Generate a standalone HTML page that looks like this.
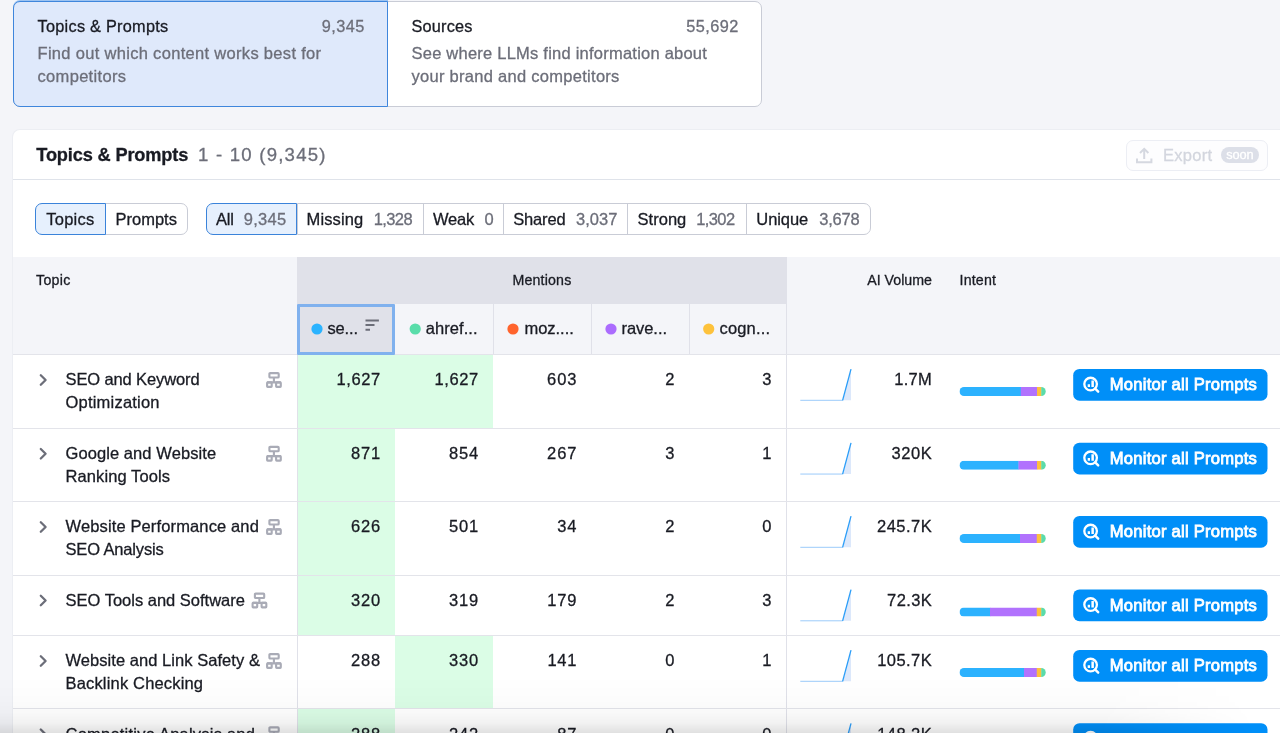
<!DOCTYPE html>
<html lang="en">
<head>
<meta charset="utf-8">
<title>Topics &amp; Prompts</title>
<style>
*{box-sizing:border-box;margin:0;padding:0}
html,body{width:1280px;height:733px;overflow:hidden;background:#f4f5f9}
body{font-family:"Liberation Sans",Arial,sans-serif;color:#191b23;font-size:16px;position:relative}
.t{position:absolute;line-height:20px;white-space:pre;color:#191b23;z-index:4;-webkit-text-stroke:0.3px}
.ic{position:absolute;z-index:4;overflow:visible}
.cards{position:absolute;left:13px;top:1px;width:749px;height:106px;border:1px solid #c9ccd6;border-radius:7px;background:#fff}
.card1{position:absolute;left:13px;top:1px;width:374.5px;height:106px;background:#dfe9fb;border:1px solid #3f86dc;border-radius:7px 0 0 7px;box-shadow:0 -1px 0 #9cc3f1}
.panel{position:absolute;left:12.5px;top:129.5px;width:1290px;height:640px;background:#fff;border-radius:7px 0 0 0;box-shadow:0 0 0 1px #eceef3}
.hline{position:absolute;left:13px;top:178.7px;width:1267px;height:1px;background:#dfe3ea}
.export{position:absolute;left:1126px;top:139.5px;width:141.5px;height:31.5px;border:1px solid #eceef4;border-radius:7px;background:#fdfdfe}
.soon{position:absolute;left:1221.2px;top:147.2px;width:37.5px;height:15.8px;border-radius:8px;background:#dcdfe8}
.pill{position:absolute;top:203px;height:32px;border:1px solid #c9ccd6;background:#fff}
.pill.sel{background:#e6f0fd;border-color:#3a83da;z-index:2}
.thead{position:absolute;left:13px;top:257.3px;width:1267px;height:97px;background:#f4f5f9}
.mband{position:absolute;left:297px;top:257.3px;width:490px;height:46.6px;background:#e0e1e9}
.sub1{position:absolute;left:297px;top:304px;width:98px;height:51px;background:#e0e1e9;border:3px solid #80b1ee;border-radius:1px;z-index:4}
.vline{position:absolute;width:1px;background:#e0e1e9;z-index:3}
.rline{position:absolute;left:13px;width:1267px;height:1px;background:#e3e4ea;z-index:3}
.green{position:absolute;background:#dbfde6;z-index:2}
.dot{position:absolute;width:11.4px;height:11.4px;border-radius:50%;top:323.3px;z-index:4}
.bar{position:absolute;height:9px;border-radius:4.5px;overflow:hidden;z-index:4}
.bar i{position:absolute;top:0;height:9px}
.btn{position:absolute;left:1073.2px;width:194.3px;height:31.8px;border-radius:6.5px;background:#008ff8;z-index:5}
.z5{z-index:5}
.z6{z-index:6}
.ms{-webkit-text-stroke:0.8px #fff}
.txt{position:absolute;left:0;top:0;width:1280px;height:733px;z-index:10;will-change:transform}
.fade{position:absolute;left:0;top:676px;width:1280px;height:57px;background:linear-gradient(to bottom,rgba(0,0,0,0) 0%,rgba(0,0,0,0.01) 42%,rgba(0,0,0,0.022) 63%,rgba(0,0,0,0.05) 82%,rgba(0,0,0,0.12) 100%);z-index:20;-webkit-mask-image:linear-gradient(to right,#000 0%,#000 86%,transparent 98%);mask-image:linear-gradient(to right,#000 0%,#000 86%,transparent 98%)}
</style>
</head>
<body>
<div class="cards"></div><div class="card1"></div>
<div class="panel"></div>
<div class="hline"></div>
<div class="export"></div><div class="soon"></div>
<svg class="ic" style="left:1136px;top:147px" width="17" height="17" viewBox="0 0 17 17"><g fill="none" stroke="#d5d8e0" stroke-width="2"><path d="M1 11.5V15.2H15.4V11.5"/><path d="M8.2 12V2M4 6L8.2 1.8L12.4 6"/></g></svg>

<div class="pill" style="left:105px;width:82.5px;border-radius:0 7px 7px 0"></div>
<div class="pill sel" style="left:35px;width:70.5px;border-radius:7px 0 0 7px"></div>
<div class="pill" style="left:296.5px;width:574.5px;border-radius:0 7px 7px 0"></div>
<div class="pill sel" style="left:206px;width:91px;border-radius:7px 0 0 7px"></div>
<div class="vline" style="left:422.5px;top:204px;height:30px;background:#c9ccd6"></div>
<div class="vline" style="left:503px;top:204px;height:30px;background:#c9ccd6"></div>
<div class="vline" style="left:627.2px;top:204px;height:30px;background:#c9ccd6"></div>
<div class="vline" style="left:746px;top:204px;height:30px;background:#c9ccd6"></div>

<div class="thead"></div>
<div class="mband"></div>
<div class="sub1"></div>
<div class="vline" style="left:493px;top:304px;height:50px"></div>
<div class="vline" style="left:591px;top:304px;height:50px"></div>
<div class="vline" style="left:688.5px;top:304px;height:50px"></div>
<div class="vline" style="left:296.5px;top:354px;height:400px"></div>
<div class="vline" style="left:786px;top:257px;height:500px"></div>
<svg class="ic" style="left:311px;top:323px" width="12" height="12" viewBox="0 0 12 12"><circle cx="6.0" cy="6" r="5.6" fill="#2bb3ff"/></svg>
<svg class="ic" style="left:409px;top:323px" width="12" height="12" viewBox="0 0 12 12"><circle cx="6.2" cy="6" r="5.6" fill="#59ddaa"/></svg>
<svg class="ic" style="left:507px;top:323px" width="12" height="12" viewBox="0 0 12 12"><circle cx="6.0" cy="6" r="5.6" fill="#ff642d"/></svg>
<svg class="ic" style="left:605px;top:323px" width="12" height="12" viewBox="0 0 12 12"><circle cx="6.0" cy="6" r="5.6" fill="#ab6cfe"/></svg>
<svg class="ic" style="left:703px;top:323px" width="12" height="12" viewBox="0 0 12 12"><circle cx="5.7" cy="6" r="5.6" fill="#fdc23c"/></svg>
<svg class="ic" style="left:365px;top:319px" width="15" height="13" viewBox="0 0 15 13"><path d="M0.5 1.5H13.9M0.5 6H9.5M0.5 10.7H5" stroke="#6c6e79" stroke-width="2" fill="none"/></svg>

<div class="green" style="left:297px;top:354.5px;width:98px;height:73.75px"></div>
<div class="green" style="left:395px;top:354.5px;width:98px;height:73.75px"></div>
<div class="rline" style="top:354px"></div>
<svg class="ic" style="left:39px;top:373px" width="10" height="14" viewBox="0 0 10 14"><g transform="translate(0 0.8)"><path d="M1.8 1.5L6.6 6.2L1.8 10.9" fill="none" stroke="#6c6e79" stroke-width="2.3" stroke-linecap="round" stroke-linejoin="round"/></g></svg>
<svg class="ic" style="left:265px;top:371px" width="19" height="19" viewBox="0 0 19 19"><g transform="translate(0 0)"><g fill="none" stroke="#a9abb6" stroke-width="2.1"><rect x="4.4" y="2.1" width="9.3" height="4.4" rx="0.8"/><rect x="2.1" y="11.4" width="4.6" height="4.5" rx="0.6"/><rect x="11.1" y="11.4" width="4.7" height="4.5" rx="0.6"/><path d="M8.9 6.5V11.4M2.1 11.4H15.8"/></g></g></svg>
<svg class="ic" style="left:800px;top:367px" width="55" height="36" viewBox="0 0 55 36"><g transform="translate(0 0.5)"><path d="M42.8 32.8L51 1.7V32.8Z" fill="#dce8fb"/><path d="M0.3 32.8H42.8" fill="none" stroke="#9ccbfa" stroke-width="1"/><path d="M42.6 32.8L51 1.7" fill="none" stroke="#2a9df8" stroke-width="1.3"/></g></svg>
<svg class="ic" style="left:959px;top:387px" width="89" height="11" viewBox="0 0 89 11"><g transform="translate(0.5 0)"><clipPath id="c354"><rect x="0" y="0" width="86.25" height="9" rx="4.5"/></clipPath><g clip-path="url(#c354)"><rect x="0" y="0" width="61.55" height="9" fill="#2cb2fe"/><rect x="61.25" y="0" width="16.55" height="9" fill="#b172fd"/><rect x="77.5" y="0" width="4.55" height="9" fill="#fdc03c"/><rect x="81.75" y="0" width="4.8" height="9" fill="#5bdcaa"/></g></g></svg>
<svg class="ic z5" style="left:1073px;top:369px" width="197" height="34" viewBox="0 0 197 34"><g transform="translate(0.2 0)"><rect x="0" y="0" width="194.3" height="31.7" rx="6.3" fill="#008ff8"/></g></svg>
<svg class="ic z6" style="left:1082px;top:375px" width="19" height="19" viewBox="0 0 19 19"><g transform="translate(0 0.5)"><g fill="none" stroke="#fff" stroke-width="2.3"><circle cx="8.6" cy="8.55" r="6.3"/><path d="M13.2 13.1L16.2 16.2" stroke-width="2.4" stroke-linecap="round"/></g><path d="M5.7 8.7h2.3v2.7H5.7zM9.4 5h2.5v6.4H9.4z" fill="#fff"/></g></svg>
<div class="green" style="left:297px;top:428.25px;width:98px;height:73.25px"></div>
<div class="rline" style="top:427.75px"></div>
<svg class="ic" style="left:39px;top:447px" width="10" height="14" viewBox="0 0 10 14"><g transform="translate(0 0.55)"><path d="M1.8 1.5L6.6 6.2L1.8 10.9" fill="none" stroke="#6c6e79" stroke-width="2.3" stroke-linecap="round" stroke-linejoin="round"/></g></svg>
<svg class="ic" style="left:265px;top:444px" width="19" height="19" viewBox="0 0 19 19"><g transform="translate(0 0.75)"><g fill="none" stroke="#a9abb6" stroke-width="2.1"><rect x="4.4" y="2.1" width="9.3" height="4.4" rx="0.8"/><rect x="2.1" y="11.4" width="4.6" height="4.5" rx="0.6"/><rect x="11.1" y="11.4" width="4.7" height="4.5" rx="0.6"/><path d="M8.9 6.5V11.4M2.1 11.4H15.8"/></g></g></svg>
<svg class="ic" style="left:800px;top:441px" width="55" height="36" viewBox="0 0 55 36"><g transform="translate(0 0.25)"><path d="M42.8 32.8L51 1.7V32.8Z" fill="#dce8fb"/><path d="M0.3 32.8H42.8" fill="none" stroke="#9ccbfa" stroke-width="1"/><path d="M42.6 32.8L51 1.7" fill="none" stroke="#2a9df8" stroke-width="1.3"/></g></svg>
<svg class="ic" style="left:959px;top:460px" width="89" height="11" viewBox="0 0 89 11"><g transform="translate(0.5 0.75)"><clipPath id="c428"><rect x="0" y="0" width="86.25" height="9" rx="4.5"/></clipPath><g clip-path="url(#c428)"><rect x="0" y="0" width="59.3" height="9" fill="#2cb2fe"/><rect x="59" y="0" width="18.8" height="9" fill="#b172fd"/><rect x="77.5" y="0" width="4.55" height="9" fill="#fdc03c"/><rect x="81.75" y="0" width="4.8" height="9" fill="#5bdcaa"/></g></g></svg>
<svg class="ic z5" style="left:1073px;top:442px" width="197" height="34" viewBox="0 0 197 34"><g transform="translate(0.2 0.75)"><rect x="0" y="0" width="194.3" height="31.7" rx="6.3" fill="#008ff8"/></g></svg>
<svg class="ic z6" style="left:1082px;top:449px" width="19" height="19" viewBox="0 0 19 19"><g transform="translate(0 0.25)"><g fill="none" stroke="#fff" stroke-width="2.3"><circle cx="8.6" cy="8.55" r="6.3"/><path d="M13.2 13.1L16.2 16.2" stroke-width="2.4" stroke-linecap="round"/></g><path d="M5.7 8.7h2.3v2.7H5.7zM9.4 5h2.5v6.4H9.4z" fill="#fff"/></g></svg>
<div class="green" style="left:297px;top:501.5px;width:98px;height:73.5px"></div>
<div class="rline" style="top:501px"></div>
<svg class="ic" style="left:39px;top:520px" width="10" height="14" viewBox="0 0 10 14"><g transform="translate(0 0.8)"><path d="M1.8 1.5L6.6 6.2L1.8 10.9" fill="none" stroke="#6c6e79" stroke-width="2.3" stroke-linecap="round" stroke-linejoin="round"/></g></svg>
<svg class="ic" style="left:265px;top:518px" width="19" height="19" viewBox="0 0 19 19"><g transform="translate(0 0)"><g fill="none" stroke="#a9abb6" stroke-width="2.1"><rect x="4.4" y="2.1" width="9.3" height="4.4" rx="0.8"/><rect x="2.1" y="11.4" width="4.6" height="4.5" rx="0.6"/><rect x="11.1" y="11.4" width="4.7" height="4.5" rx="0.6"/><path d="M8.9 6.5V11.4M2.1 11.4H15.8"/></g></g></svg>
<svg class="ic" style="left:800px;top:514px" width="55" height="36" viewBox="0 0 55 36"><g transform="translate(0 0.5)"><path d="M42.8 32.8L51 1.7V32.8Z" fill="#dce8fb"/><path d="M0.3 32.8H42.8" fill="none" stroke="#9ccbfa" stroke-width="1"/><path d="M42.6 32.8L51 1.7" fill="none" stroke="#2a9df8" stroke-width="1.3"/></g></svg>
<svg class="ic" style="left:959px;top:534px" width="89" height="11" viewBox="0 0 89 11"><g transform="translate(0.5 0)"><clipPath id="c501"><rect x="0" y="0" width="86.25" height="9" rx="4.5"/></clipPath><g clip-path="url(#c501)"><rect x="0" y="0" width="60.8" height="9" fill="#2cb2fe"/><rect x="60.5" y="0" width="17.05" height="9" fill="#b172fd"/><rect x="77.25" y="0" width="4.8" height="9" fill="#fdc03c"/><rect x="81.75" y="0" width="4.8" height="9" fill="#5bdcaa"/></g></g></svg>
<svg class="ic z5" style="left:1073px;top:516px" width="197" height="34" viewBox="0 0 197 34"><g transform="translate(0.2 0)"><rect x="0" y="0" width="194.3" height="31.7" rx="6.3" fill="#008ff8"/></g></svg>
<svg class="ic z6" style="left:1082px;top:522px" width="19" height="19" viewBox="0 0 19 19"><g transform="translate(0 0.5)"><g fill="none" stroke="#fff" stroke-width="2.3"><circle cx="8.6" cy="8.55" r="6.3"/><path d="M13.2 13.1L16.2 16.2" stroke-width="2.4" stroke-linecap="round"/></g><path d="M5.7 8.7h2.3v2.7H5.7zM9.4 5h2.5v6.4H9.4z" fill="#fff"/></g></svg>
<div class="green" style="left:297px;top:575px;width:98px;height:60.5px"></div>
<div class="rline" style="top:574.5px"></div>
<svg class="ic" style="left:39px;top:594px" width="10" height="14" viewBox="0 0 10 14"><g transform="translate(0 0.3)"><path d="M1.8 1.5L6.6 6.2L1.8 10.9" fill="none" stroke="#6c6e79" stroke-width="2.3" stroke-linecap="round" stroke-linejoin="round"/></g></svg>
<svg class="ic" style="left:250px;top:591px" width="19" height="19" viewBox="0 0 19 19"><g transform="translate(0.5 0.5)"><g fill="none" stroke="#a9abb6" stroke-width="2.1"><rect x="4.4" y="2.1" width="9.3" height="4.4" rx="0.8"/><rect x="2.1" y="11.4" width="4.6" height="4.5" rx="0.6"/><rect x="11.1" y="11.4" width="4.7" height="4.5" rx="0.6"/><path d="M8.9 6.5V11.4M2.1 11.4H15.8"/></g></g></svg>
<svg class="ic" style="left:800px;top:588px" width="55" height="36" viewBox="0 0 55 36"><g transform="translate(0 0)"><path d="M42.8 32.8L51 1.7V32.8Z" fill="#dce8fb"/><path d="M0.3 32.8H42.8" fill="none" stroke="#9ccbfa" stroke-width="1"/><path d="M42.6 32.8L51 1.7" fill="none" stroke="#2a9df8" stroke-width="1.3"/></g></svg>
<svg class="ic" style="left:959px;top:607px" width="89" height="11" viewBox="0 0 89 11"><g transform="translate(0.5 0.5)"><clipPath id="c575"><rect x="0" y="0" width="86.25" height="9" rx="4.5"/></clipPath><g clip-path="url(#c575)"><rect x="0" y="0" width="30.8" height="9" fill="#2cb2fe"/><rect x="30.5" y="0" width="47.05" height="9" fill="#b172fd"/><rect x="77.25" y="0" width="4.8" height="9" fill="#fdc03c"/><rect x="81.75" y="0" width="4.8" height="9" fill="#5bdcaa"/></g></g></svg>
<svg class="ic z5" style="left:1073px;top:589px" width="197" height="34" viewBox="0 0 197 34"><g transform="translate(0.2 0.5)"><rect x="0" y="0" width="194.3" height="31.7" rx="6.3" fill="#008ff8"/></g></svg>
<svg class="ic z6" style="left:1082px;top:596px" width="19" height="19" viewBox="0 0 19 19"><g transform="translate(0 0)"><g fill="none" stroke="#fff" stroke-width="2.3"><circle cx="8.6" cy="8.55" r="6.3"/><path d="M13.2 13.1L16.2 16.2" stroke-width="2.4" stroke-linecap="round"/></g><path d="M5.7 8.7h2.3v2.7H5.7zM9.4 5h2.5v6.4H9.4z" fill="#fff"/></g></svg>
<div class="green" style="left:395px;top:635.5px;width:98px;height:73.25px"></div>
<div class="rline" style="top:635px"></div>
<svg class="ic" style="left:39px;top:654px" width="10" height="14" viewBox="0 0 10 14"><g transform="translate(0 0.8)"><path d="M1.8 1.5L6.6 6.2L1.8 10.9" fill="none" stroke="#6c6e79" stroke-width="2.3" stroke-linecap="round" stroke-linejoin="round"/></g></svg>
<svg class="ic" style="left:265px;top:652px" width="19" height="19" viewBox="0 0 19 19"><g transform="translate(0 0)"><g fill="none" stroke="#a9abb6" stroke-width="2.1"><rect x="4.4" y="2.1" width="9.3" height="4.4" rx="0.8"/><rect x="2.1" y="11.4" width="4.6" height="4.5" rx="0.6"/><rect x="11.1" y="11.4" width="4.7" height="4.5" rx="0.6"/><path d="M8.9 6.5V11.4M2.1 11.4H15.8"/></g></g></svg>
<svg class="ic" style="left:800px;top:648px" width="55" height="36" viewBox="0 0 55 36"><g transform="translate(0 0.5)"><path d="M42.8 32.8L51 1.7V32.8Z" fill="#dce8fb"/><path d="M0.3 32.8H42.8" fill="none" stroke="#9ccbfa" stroke-width="1"/><path d="M42.6 32.8L51 1.7" fill="none" stroke="#2a9df8" stroke-width="1.3"/></g></svg>
<svg class="ic" style="left:959px;top:668px" width="89" height="11" viewBox="0 0 89 11"><g transform="translate(0.5 0)"><clipPath id="c635"><rect x="0" y="0" width="86.25" height="9" rx="4.5"/></clipPath><g clip-path="url(#c635)"><rect x="0" y="0" width="64.8" height="9" fill="#2cb2fe"/><rect x="64.5" y="0" width="13.05" height="9" fill="#b172fd"/><rect x="77.25" y="0" width="4.8" height="9" fill="#fdc03c"/><rect x="81.75" y="0" width="4.8" height="9" fill="#5bdcaa"/></g></g></svg>
<svg class="ic z5" style="left:1073px;top:650px" width="197" height="34" viewBox="0 0 197 34"><g transform="translate(0.2 0)"><rect x="0" y="0" width="194.3" height="31.7" rx="6.3" fill="#008ff8"/></g></svg>
<svg class="ic z6" style="left:1082px;top:656px" width="19" height="19" viewBox="0 0 19 19"><g transform="translate(0 0.5)"><g fill="none" stroke="#fff" stroke-width="2.3"><circle cx="8.6" cy="8.55" r="6.3"/><path d="M13.2 13.1L16.2 16.2" stroke-width="2.4" stroke-linecap="round"/></g><path d="M5.7 8.7h2.3v2.7H5.7zM9.4 5h2.5v6.4H9.4z" fill="#fff"/></g></svg>
<div class="green" style="left:297px;top:708.75px;width:98px;height:73.5px"></div>
<div class="rline" style="top:708.25px"></div>
<svg class="ic" style="left:39px;top:728px" width="10" height="14" viewBox="0 0 10 14"><g transform="translate(0 0.05)"><path d="M1.8 1.5L6.6 6.2L1.8 10.9" fill="none" stroke="#6c6e79" stroke-width="2.3" stroke-linecap="round" stroke-linejoin="round"/></g></svg>
<svg class="ic" style="left:265px;top:725px" width="19" height="19" viewBox="0 0 19 19"><g transform="translate(0 0.25)"><g fill="none" stroke="#a9abb6" stroke-width="2.1"><rect x="4.4" y="2.1" width="9.3" height="4.4" rx="0.8"/><rect x="2.1" y="11.4" width="4.6" height="4.5" rx="0.6"/><rect x="11.1" y="11.4" width="4.7" height="4.5" rx="0.6"/><path d="M8.9 6.5V11.4M2.1 11.4H15.8"/></g></g></svg>
<svg class="ic" style="left:800px;top:721px" width="55" height="36" viewBox="0 0 55 36"><g transform="translate(0 0.75)"><path d="M42.8 32.8L51 1.7V32.8Z" fill="#dce8fb"/><path d="M0.3 32.8H42.8" fill="none" stroke="#9ccbfa" stroke-width="1"/><path d="M42.6 32.8L51 1.7" fill="none" stroke="#2a9df8" stroke-width="1.3"/></g></svg>
<svg class="ic" style="left:959px;top:741px" width="89" height="11" viewBox="0 0 89 11"><g transform="translate(0.5 0.25)"><clipPath id="c708"><rect x="0" y="0" width="86" height="9" rx="4.5"/></clipPath><g clip-path="url(#c708)"><rect x="0" y="0" width="60.3" height="9" fill="#2cb2fe"/><rect x="60" y="0" width="17.3" height="9" fill="#b172fd"/><rect x="77" y="0" width="4.8" height="9" fill="#fdc03c"/><rect x="81.5" y="0" width="4.8" height="9" fill="#5bdcaa"/></g></g></svg>
<svg class="ic z5" style="left:1073px;top:723px" width="197" height="34" viewBox="0 0 197 34"><g transform="translate(0.2 0.25)"><rect x="0" y="0" width="194.3" height="31.7" rx="6.3" fill="#008ff8"/></g></svg>
<svg class="ic z6" style="left:1082px;top:729px" width="19" height="19" viewBox="0 0 19 19"><g transform="translate(0 0.75)"><g fill="none" stroke="#fff" stroke-width="2.3"><circle cx="8.6" cy="8.55" r="6.3"/><path d="M13.2 13.1L16.2 16.2" stroke-width="2.4" stroke-linecap="round"/></g><path d="M5.7 8.7h2.3v2.7H5.7zM9.4 5h2.5v6.4H9.4z" fill="#fff"/></g></svg>
<div class="txt">
<div class="t" style="left:37.6px;top:15.65px;font-size:16.3px;letter-spacing:0.26px;">Topics &amp; Prompts</div>
<div class="t" style="left:321.7px;top:15.65px;font-size:16.3px;letter-spacing:0.44px;color:#6c6e79;">9,345</div>
<div class="t" style="left:37.5px;top:43.08px;font-size:16.5px;letter-spacing:0.31px;color:#6c6e79;">Find out which content works best for</div>
<div class="t" style="left:37.5px;top:65.98px;font-size:16.5px;letter-spacing:0.32px;color:#6c6e79;">competitors</div>
<div class="t" style="left:411.5px;top:15.65px;font-size:16.3px;letter-spacing:0.21px;">Sources</div>
<div class="t" style="left:686.2px;top:15.65px;font-size:16.3px;letter-spacing:0.44px;color:#6c6e79;">55,692</div>
<div class="t" style="left:411.5px;top:43.08px;font-size:16.5px;letter-spacing:0.23px;color:#6c6e79;">See where LLMs find information about</div>
<div class="t" style="left:411.5px;top:65.98px;font-size:16.5px;letter-spacing:0.28px;color:#6c6e79;">your brand and competitors</div>
<div class="t" style="left:36.3px;top:144.99px;font-size:18.2px;letter-spacing:-0.15px;font-weight:bold;">Topics &amp; Prompts</div>
<div class="t" style="left:198px;top:144.86px;font-size:18.6px;letter-spacing:1.22px;color:#6c6e79;">1 - 10 (9,345)</div>
<div class="t" style="left:1163px;top:144.98px;font-size:16.5px;letter-spacing:0.26px;color:#d3d6de;">Export</div>
<div class="t" style="left:1226.2px;top:144.76px;font-size:12.8px;letter-spacing:-0.08px;color:#ffffff;">soon</div>
<div class="t" style="left:46.3px;top:208.78px;font-size:16.5px;letter-spacing:0.24px;">Topics</div>
<div class="t" style="left:115.6px;top:208.78px;font-size:16.5px;letter-spacing:-0.02px;">Prompts</div>
<div class="t" style="left:216px;top:208.78px;font-size:16.5px;letter-spacing:-0.27px;">All</div>
<div class="t" style="left:243.8px;top:208.78px;font-size:16.5px;letter-spacing:0.25px;color:#6c6e79;">9,345</div>
<div class="t" style="left:306.5px;top:208.78px;font-size:16.5px;letter-spacing:0.14px;">Missing</div>
<div class="t" style="left:373.8px;top:208.78px;font-size:16.5px;letter-spacing:-0.62px;color:#6c6e79;">1,328</div>
<div class="t" style="left:433px;top:208.78px;font-size:16.5px;letter-spacing:-0.2px;">Weak</div>
<div class="t" style="left:484.5px;top:208.78px;font-size:16.5px;color:#6c6e79;">0</div>
<div class="t" style="left:513.3px;top:208.78px;font-size:16.5px;letter-spacing:-0.18px;">Shared</div>
<div class="t" style="left:576px;top:208.78px;font-size:16.5px;letter-spacing:0.05px;color:#6c6e79;">3,037</div>
<div class="t" style="left:637.5px;top:208.78px;font-size:16.5px;letter-spacing:0.03px;">Strong</div>
<div class="t" style="left:696.3px;top:208.78px;font-size:16.5px;letter-spacing:-0.62px;color:#6c6e79;">1,302</div>
<div class="t" style="left:756.3px;top:208.78px;font-size:16.5px;letter-spacing:-0.06px;">Unique</div>
<div class="t" style="left:819.3px;top:208.78px;font-size:16.5px;letter-spacing:-0.25px;color:#6c6e79;">3,678</div>
<div class="t" style="left:36.1px;top:269.78px;font-size:14.2px;letter-spacing:0.27px;">Topic</div>
<div class="t" style="left:512.5px;top:269.78px;font-size:14.2px;letter-spacing:0.17px;">Mentions</div>
<div class="t" style="left:867.3px;top:269.78px;font-size:14.2px;letter-spacing:-0.01px;">AI Volume</div>
<div class="t" style="left:959.5px;top:269.78px;font-size:14.2px;letter-spacing:0.2px;">Intent</div>
<div class="t" style="left:327.5px;top:318.08px;font-size:16.5px;letter-spacing:-0.17px;">se...</div>
<div class="t" style="left:425.8px;top:318.08px;font-size:16.5px;letter-spacing:0.05px;">ahref...</div>
<div class="t" style="left:524.5px;top:318.08px;font-size:16.5px;letter-spacing:-0.04px;">moz....</div>
<div class="t" style="left:621.5px;top:318.08px;font-size:16.5px;letter-spacing:-0.06px;">rave...</div>
<div class="t" style="left:719.5px;top:318.08px;font-size:16.5px;letter-spacing:0.16px;">cogn...</div>
<div class="t" style="left:65.5px;top:369.28px;font-size:16.5px;letter-spacing:-0.12px;">SEO and Keyword</div>
<div class="t" style="left:65.5px;top:392.28px;font-size:16.5px;letter-spacing:0.21px;">Optimization</div>
<div class="t" style="left:336.6px;top:369.28px;font-size:16.5px;letter-spacing:0.58px;">1,627</div>
<div class="t" style="left:434.6px;top:369.28px;font-size:16.5px;letter-spacing:0.58px;">1,627</div>
<div class="t" style="left:547.1px;top:369.28px;font-size:16.5px;letter-spacing:0.88px;">603</div>
<div class="t" style="left:665.31px;top:369.28px;font-size:16.5px;">2</div>
<div class="t" style="left:762.31px;top:369.28px;font-size:16.5px;">3</div>
<div class="t" style="left:894.3px;top:369.28px;font-size:16.5px;letter-spacing:0.24px;">1.7M</div>
<div class="t ms" style="left:1109.8px;top:375.15px;font-size:16.6px;letter-spacing:0.23px;color:#ffffff;">Monitor all Prompts</div>
<div class="t" style="left:65.5px;top:443.03px;font-size:16.5px;letter-spacing:0.08px;">Google and Website</div>
<div class="t" style="left:65.5px;top:466.03px;font-size:16.5px;letter-spacing:0.1px;">Ranking Tools</div>
<div class="t" style="left:351.1px;top:443.03px;font-size:16.5px;letter-spacing:0.78px;">871</div>
<div class="t" style="left:448.9px;top:443.03px;font-size:16.5px;letter-spacing:0.88px;">854</div>
<div class="t" style="left:547.1px;top:443.03px;font-size:16.5px;letter-spacing:0.88px;">267</div>
<div class="t" style="left:665.31px;top:443.03px;font-size:16.5px;">3</div>
<div class="t" style="left:762.31px;top:443.03px;font-size:16.5px;">1</div>
<div class="t" style="left:891.5px;top:443.03px;font-size:16.5px;letter-spacing:0.55px;">320K</div>
<div class="t ms" style="left:1109.8px;top:448.9px;font-size:16.6px;letter-spacing:0.23px;color:#ffffff;">Monitor all Prompts</div>
<div class="t" style="left:65.5px;top:516.28px;font-size:16.5px;letter-spacing:0.13px;">Website Performance and</div>
<div class="t" style="left:65.5px;top:539.28px;font-size:16.5px;letter-spacing:-0.15px;">SEO Analysis</div>
<div class="t" style="left:350.9px;top:516.28px;font-size:16.5px;letter-spacing:0.88px;">626</div>
<div class="t" style="left:449.1px;top:516.28px;font-size:16.5px;letter-spacing:0.78px;">501</div>
<div class="t" style="left:557.2px;top:516.28px;font-size:16.5px;letter-spacing:0.84px;">34</div>
<div class="t" style="left:665.31px;top:516.28px;font-size:16.5px;">2</div>
<div class="t" style="left:762.31px;top:516.28px;font-size:16.5px;">0</div>
<div class="t" style="left:877px;top:516.28px;font-size:16.5px;letter-spacing:0.48px;">245.7K</div>
<div class="t ms" style="left:1109.8px;top:522.15px;font-size:16.6px;letter-spacing:0.23px;color:#ffffff;">Monitor all Prompts</div>
<div class="t" style="left:65.5px;top:589.78px;font-size:16.5px;">SEO Tools and Software</div>
<div class="t" style="left:350.9px;top:589.78px;font-size:16.5px;letter-spacing:0.88px;">320</div>
<div class="t" style="left:449.1px;top:589.78px;font-size:16.5px;letter-spacing:0.78px;">319</div>
<div class="t" style="left:547.3px;top:589.78px;font-size:16.5px;letter-spacing:0.78px;">179</div>
<div class="t" style="left:665.31px;top:589.78px;font-size:16.5px;">2</div>
<div class="t" style="left:762.31px;top:589.78px;font-size:16.5px;">3</div>
<div class="t" style="left:887.1px;top:589.78px;font-size:16.5px;letter-spacing:0.37px;">72.3K</div>
<div class="t ms" style="left:1109.8px;top:595.65px;font-size:16.6px;letter-spacing:0.23px;color:#ffffff;">Monitor all Prompts</div>
<div class="t" style="left:65.5px;top:650.28px;font-size:16.5px;letter-spacing:0.05px;">Website and Link Safety &amp;</div>
<div class="t" style="left:65.5px;top:673.28px;font-size:16.5px;letter-spacing:0.17px;">Backlink Checking</div>
<div class="t" style="left:350.9px;top:650.28px;font-size:16.5px;letter-spacing:0.88px;">288</div>
<div class="t" style="left:448.9px;top:650.28px;font-size:16.5px;letter-spacing:0.88px;">330</div>
<div class="t" style="left:547.5px;top:650.28px;font-size:16.5px;letter-spacing:0.68px;">141</div>
<div class="t" style="left:665.31px;top:650.28px;font-size:16.5px;">0</div>
<div class="t" style="left:762.31px;top:650.28px;font-size:16.5px;">1</div>
<div class="t" style="left:877.2px;top:650.28px;font-size:16.5px;letter-spacing:0.44px;">105.7K</div>
<div class="t ms" style="left:1109.8px;top:656.15px;font-size:16.6px;letter-spacing:0.23px;color:#ffffff;">Monitor all Prompts</div>
<div class="t" style="left:65.5px;top:723.53px;font-size:16.5px;letter-spacing:0.22px;">Competitive Analysis and</div>
<div class="t" style="left:65.5px;top:746.53px;font-size:16.5px;letter-spacing:-0.5px;">Benchmarking</div>
<div class="t" style="left:350.9px;top:723.53px;font-size:16.5px;letter-spacing:0.88px;">288</div>
<div class="t" style="left:448.9px;top:723.53px;font-size:16.5px;letter-spacing:0.88px;">242</div>
<div class="t" style="left:557.2px;top:723.53px;font-size:16.5px;letter-spacing:0.84px;">87</div>
<div class="t" style="left:665.31px;top:723.53px;font-size:16.5px;">0</div>
<div class="t" style="left:762.31px;top:723.53px;font-size:16.5px;">0</div>
<div class="t" style="left:877.2px;top:723.53px;font-size:16.5px;letter-spacing:0.44px;">148.2K</div>
<div class="t ms" style="left:1109.8px;top:730.6px;font-size:16.6px;letter-spacing:0.23px;color:#ffffff;">Monitor all Prompts</div>
</div>
<div class="fade"></div>
</body>
</html>
